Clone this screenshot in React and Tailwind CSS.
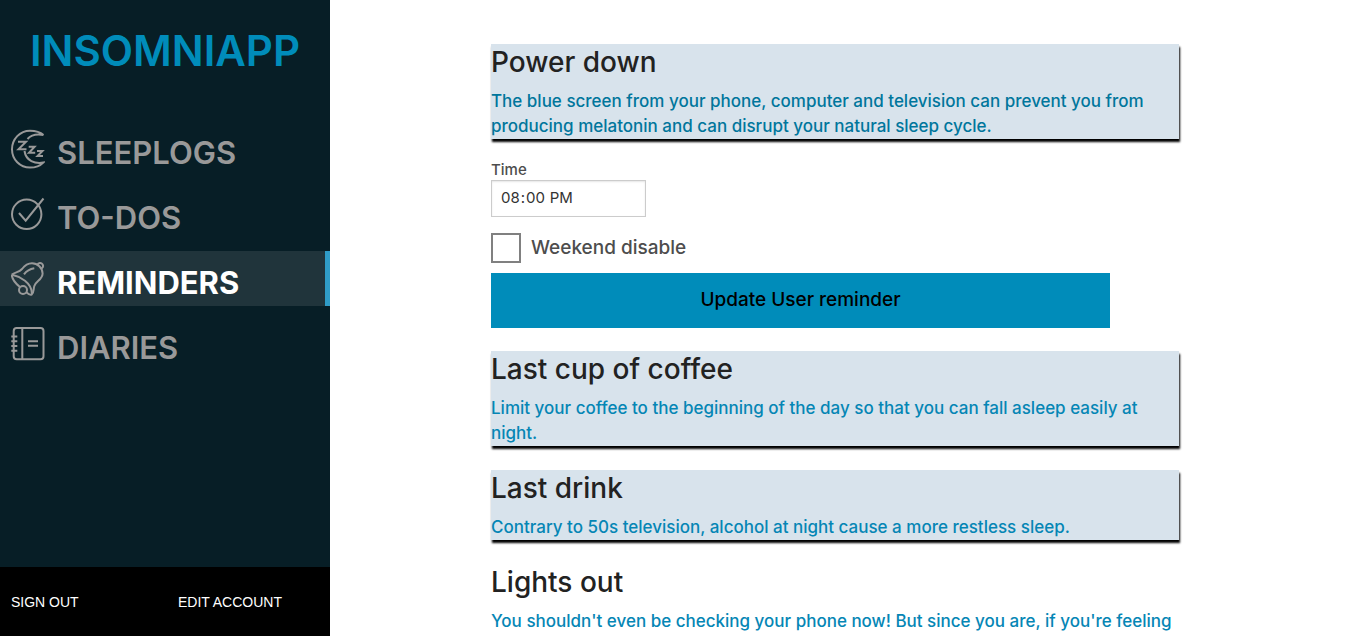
function MoonIcon() {
  return (
    <Icon>
      <path d="M32.5 6C29 2.800 24 1.700 19 1.700 9 1.700 1 10 1 20.300s8 18.300 18 18.300c5 0 10-1.600 13.300-5C24 35 15 32 13.500 22M32.500 6C26 4.800 20 6 16.500 10" />
      <path d="M7 12.800H15L7.500 20.300h8M17.700 17.700h5.900L18 23.800h6.200M26 21.900h5.500l-5 5.200h5.500" />
    </Icon>
  );
}

function CheckIcon() {
  return (
    <Icon>
      <circle cx="15.700" cy="20.300" r="14.700" />
      <path d="M8 19l6.700 7.700L32.500 4.500" />
    </Icon>
  );
}

function BellIcon() {
  return (
    <Icon>
      <path d="M.9 15.600C4 13 8 13.500 11 10c3-4 6-5.800 10-5.800 5.500 0 10.500 4.500 10.600 10.300 0 6-6.600 7.500-8.300 12.500-1 3-.2 6.500-2.600 8.500-1.500.5-3.500-.5-5-2M.9 15.600c-.3 4 4 9 8 12.500" />
      <path d="M1.200 15.800c5 1 9 3.200 12.800 6 3.800 3 7 7.500 7 13.200M13 15.300c3-4 6-5.300 10.300-6" />
      <circle cx="12" cy="31" r="4" />
      <path d="M26.300 5.800c1-2.200 4-2.500 5.200-.6 1 1.600.4 3.300-.9 4.300" />
    </Icon>
  );
}

function DiaryIcon() {
  return (
    <Icon>
      <rect x="2.700" y="4" width="29.800" height="31.300" rx="3" />
      <path d="M11.300 4v31.300M.3 12.500h6M.3 17.200h6M.3 22h6M.3 26.800h6M17 17.300h10M17 21.800h10" />
    </Icon>
  );
}

function Icon({ children }) {
  return (
    <svg
      className="h-10 w-[34px] shrink-0 text-[#999999]"
      viewBox="0 0 34 40"
      fill="none"
      stroke="currentColor"
      strokeWidth="2"
      aria-hidden="true"
    >
      {children}
    </svg>
  );
}

const links = [
  { label: "Sleeplogs", icon: MoonIcon },
  { label: "To-dos", icon: CheckIcon },
  { label: "Reminders", icon: BellIcon, active: true },
  { label: "Diaries", icon: DiaryIcon },
];

function Sidebar() {
  return (
    <aside className="sticky top-0 flex h-screen w-[330px] shrink-0 flex-col bg-[#071e26]">
      <h1 className="pt-6 text-center text-[42px] leading-[54px] font-semibold text-[#008cba] uppercase">
        Insomniapp
      </h1>
      <nav className="mt-[43px] flex flex-1 flex-col gap-2.5">
        {links.map(({ label, icon: LinkIcon, active }) => (
          <a
            key={label}
            href="#"
            aria-current={active ? "page" : undefined}
            className={
              "flex h-[55px] items-center gap-3 pl-[11px] text-[31px] leading-10 uppercase " +
              (active
                ? "border-r-[5px] border-[#2f9bc6] bg-[#20343b] font-bold text-white"
                : "font-semibold text-[#999999]")
            }
          >
            <LinkIcon />
            <span className="pt-2">{label}</span>
          </a>
        ))}
      </nav>
      <footer className="grid h-[69px] grid-cols-2 items-center bg-black font-['Liberation_Sans',sans-serif] text-sm text-white uppercase">
        <a href="#" className="pl-[11px]">Sign out</a>
        <a href="#" className="pl-[13px]">Edit account</a>
      </footer>
    </aside>
  );
}

function Card({ title, text, plain, current }) {
  return (
    <section className={"mb-6 last:mb-0 " + (plain ? "" : "bg-[#d8e3ec] shadow-[1px_3px_2px_#000]")}>
      <h2 className="mb-2 text-[28px] leading-[37px] font-medium text-[#222222]">{title}</h2>
      <p className={"text-[17px] leading-[25px] font-medium " + (current ? "text-[#00769c]" : "text-[#0586b5]")}>
        {text}
      </p>
    </section>
  );
}

function ReminderForm() {
  return (
    <form className="-mt-1 mb-[23px] w-[90%]" onSubmit={(e) => e.preventDefault()}>
      <label htmlFor="time" className="block text-[15px] leading-[21px] font-medium text-[#4d4d4d]">
        Time
      </label>
      <input
        id="time"
        type="time"
        defaultValue="20:00"
        className="block h-[37px] w-1/4 border border-[#cccccc] px-2 text-[15px] text-[#333333] shadow-[inset_0_1px_2px_rgba(0,0,0,0.1)] [&::-webkit-calendar-picker-indicator]:hidden"
      />
      <div className="mt-4 flex h-[30px] items-center gap-2.5">
        <input
          id="weekend"
          type="checkbox"
          className="size-[30px] appearance-none border-2 border-[#808080] bg-white checked:bg-[#008cba]"
        />
        <label htmlFor="weekend" className="text-[19px] leading-[30px] font-medium text-[#4d4d4d]">
          Weekend disable
        </label>
      </div>
      <button type="submit" className="mt-2.5 h-[55px] w-full bg-[#008cba] text-[19px] font-medium text-black">
        Update User reminder
      </button>
    </form>
  );
}

export default function App() {
  return (
    <div className="flex min-h-screen bg-white font-['Inter',sans-serif]">
      <Sidebar />
      <main className="min-w-0 flex-1 pt-11 pr-[13.2%] pl-[161px]">
        <Card
          current
          title="Power down"
          text="The blue screen from your phone, computer and television can prevent you from producing melatonin and can disrupt your natural sleep cycle."
        />
        <ReminderForm />
        <Card
          title="Last cup of coffee"
          text="Limit your coffee to the beginning of the day so that you can fall asleep easily at night."
        />
        <Card
          title="Last drink"
          text="Contrary to 50s television, alcohol at night cause a more restless sleep."
        />
        <Card
          plain
          title="Lights out"
          text="You shouldn't even be checking your phone now! But since you are, if you're feeling"
        />
      </main>
    </div>
  );
}
